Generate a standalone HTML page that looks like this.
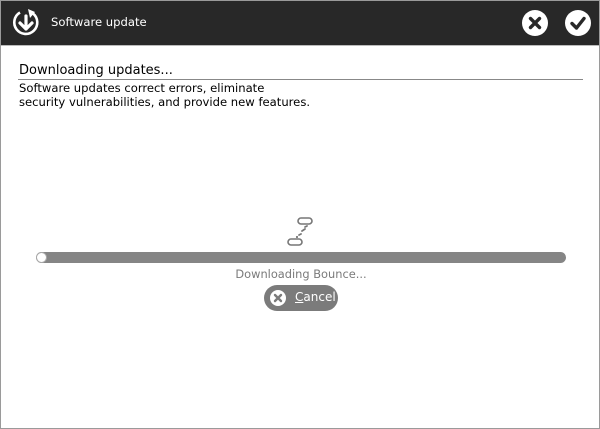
<!DOCTYPE html>
<html><head><meta charset="utf-8"><style>
html,body{margin:0;padding:0;width:600px;height:429px;overflow:hidden;background:#fff;font-family:"DejaVu Sans","Liberation Sans",sans-serif;}
.frame{position:absolute;left:0;top:0;width:598px;height:427px;border:1px solid #9a9a9a;background:#fff;}
.hdr{position:absolute;left:0;top:0;width:598px;height:44px;background:#282828;border-bottom:1px solid #bbb;}
.title{position:absolute;left:50px;top:14px;color:#fff;font-size:11.6px;}
.h1{position:absolute;left:18px;top:62px;font-size:13px;color:#000;}
.rule{position:absolute;left:17px;top:78px;width:565px;height:1px;background:#888;}
.desc{position:absolute;left:18px;top:80px;font-size:11.6px;line-height:14px;color:#000;}
.bar{position:absolute;left:35px;top:251px;width:530px;height:11px;border-radius:6px;background:#858585;}
.knob{position:absolute;left:35px;top:251px;width:11px;height:11px;border-radius:50%;background:#fff;border:1px solid #aaa;box-sizing:border-box;}
.lbl{position:absolute;left:0;width:600px;top:266px;text-align:center;font-size:11.4px;color:#7a7a7a;}
.btn{position:absolute;left:263px;top:284px;width:74px;height:26px;border-radius:13px;background:#7b7b7b;}
.btn span{position:absolute;left:31px;top:5px;color:#fff;font-size:12px;}
</style></head><body>
<div class="frame">
<div class="hdr">
<svg style="position:absolute;left:10px;top:7px" width="30" height="30" viewBox="0 0 30 30">
<path d="M22 5.5 A11.5 11.5 0 1 1 9 4.5" fill="none" stroke="#fff" stroke-width="2.6"/>
<path d="M17 1 L24 4 L19 10 Z" fill="#fff"/>
<path d="M15 8 V21 M9 15 L15 21 L21 15" fill="none" stroke="#fff" stroke-width="3.2" stroke-linecap="round" stroke-linejoin="round"/>
</svg>
<div class="title">Software update</div>
<svg style="position:absolute;left:521px;top:9px" width="26" height="26" viewBox="0 0 26 26"><circle cx="13" cy="13" r="13" fill="#fff"/><path d="M8.5 8.5 L17.5 17.5 M17.5 8.5 L8.5 17.5" stroke="#282828" stroke-width="3.4" stroke-linecap="round"/></svg>
<svg style="position:absolute;left:564px;top:9px" width="26" height="26" viewBox="0 0 26 26"><circle cx="13" cy="13" r="13" fill="#fff"/><path d="M7 13.5 L11.5 18 L19 8.5" fill="none" stroke="#282828" stroke-width="3.4" stroke-linecap="round" stroke-linejoin="round"/></svg>
</div>
<div class="h1">Downloading updates...</div>
<div class="rule"></div>
<div class="desc">Software updates correct errors, eliminate<br>security vulnerabilities, and provide new features.</div>
<svg style="position:absolute;left:285px;top:215px" width="30" height="32" viewBox="0 0 30 32">
<rect x="12" y="2" width="14" height="6" rx="3" fill="#fff" stroke="#777" stroke-width="1.6"/>
<rect x="2" y="23" width="14" height="6" rx="3" fill="#fff" stroke="#777" stroke-width="1.6"/>
<path d="M19 11 L21 10 M16 15 L19 13 M13 19 L15 18" stroke="#777" stroke-width="1.8" stroke-linecap="round"/>
<circle cx="11" cy="21" r="1.1" fill="#777"/>
</svg>
<div class="bar"></div><div class="knob"></div>
<div class="lbl">Downloading Bounce...</div>
<div class="btn">
<svg style="position:absolute;left:6px;top:5px" width="16" height="16" viewBox="0 0 16 16"><circle cx="8" cy="8" r="8" fill="#fff"/><path d="M5 5 L11 11 M11 5 L5 11" stroke="#7b7b7b" stroke-width="2.4" stroke-linecap="round"/></svg>
<span><u>C</u>ancel</span>
</div>
</div>
</body></html>
